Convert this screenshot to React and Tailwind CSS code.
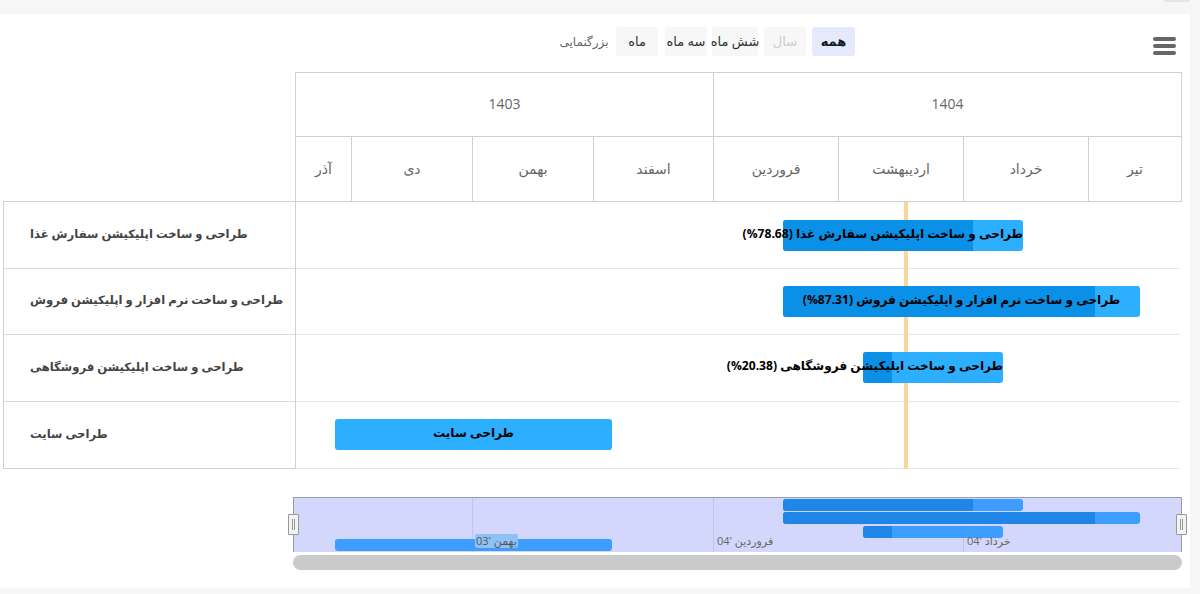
const months = [
  ["آذر", "w-[56px]"],
  ["دی", "w-[121px]"],
  ["بهمن", "w-[121px]"],
  ["اسفند", "w-[120px]"],
  ["فروردین", "w-[125px]"],
  ["اردیبهشت", "w-[125px]"],
  ["خرداد", "w-[125px]"],
  ["تیر", "w-[92px]"],
];
const rows = [
  { label: "طراحی و ساخت اپلیکیشن سفارش غذا", text: "طراحی و ساخت اپلیکیشن سفارش غذا (78.68%)", ml: "ml-[487px]", w: "w-[240px]", p: "w-[190px]", end: true, h: "h-[67px]", lh: "h-[67px]", pad: "" },
  { label: "طراحی و ساخت نرم افزار و اپلیکیشن فروش", text: "طراحی و ساخت نرم افزار و اپلیکیشن فروش (87.31%)", ml: "ml-[487px]", w: "w-[357px]", p: "w-[312px]", end: false, h: "h-[66px]", lh: "h-[66px]", pad: "" },
  { label: "طراحی و ساخت اپلیکیشن فروشگاهی", text: "طراحی و ساخت اپلیکیشن فروشگاهی (20.38%)", ml: "ml-[567px]", w: "w-[140px]", p: "w-[29px]", end: true, h: "h-[67px]", lh: "h-[67px]", pad: "pb-[1px]" },
  { label: "طراحی سایت", text: "طراحی سایت", ml: "ml-[39px]", w: "w-[277px]", p: "", end: false, h: "h-[67px]", lh: "h-[66px]", pad: "pb-[2px]" },
];
const minis = [
  { ml: "ml-[489px]", w: "w-[240px]", p: "w-[190px]" },
  { ml: "ml-[489px]", w: "w-[357px]", p: "w-[312px]" },
  { ml: "ml-[569px]", w: "w-[140px]", p: "w-[29px]" },
  { ml: "ml-[41px]", w: "w-[277px]", p: "" },
];
function Handle({ className }) {
  return (
    <div className={"absolute top-[16px] w-[11px] h-[21px] bg-[#f2f2f2] border border-[#999] rounded-[1px] flex items-center justify-center gap-[1px] " + className}>
      <span className="w-px h-[11px] bg-[#999]" />
      <span className="w-px h-[11px] bg-[#999]" />
    </div>
  );
}
function Btn({ children, className }) {
  return <div className={"h-[29px] rounded-[3px] flex items-center justify-center text-[13px] " + className}>{children}</div>;
}
export default function App() {
  return (
    <div dir="ltr" className="relative w-[1200px] h-[594px] overflow-hidden bg-[#f6f6f6] pt-[14px] font-['Open_Sans','DejaVu_Sans',sans-serif]">
      <div className="absolute top-0 right-[10px] w-[26px] h-[2px] rounded-b bg-[#e6e6e6]" />
      <div className="w-[1190px] h-[574px] bg-white">
        {/* toolbar */}
        <div className="relative h-[58px] pt-[13px] pl-[560px] flex items-start">
          <div dir="rtl" className="w-[48px] mr-[8px] h-[29px] flex items-center justify-center text-[12px] text-[#666] whitespace-nowrap">بزرگنمایی</div>
          <Btn className="w-[42px] mr-[7px] bg-[#f7f7f7] text-[#333]">ماه</Btn>
          <Btn className="w-[42px] mr-[5px] bg-[#f7f7f7] text-[#333] whitespace-nowrap">سه ماه</Btn>
          <Btn className="w-[46px] mr-[6px] bg-[#f7f7f7] text-[#333] whitespace-nowrap">شش ماه</Btn>
          <Btn className="w-[42px] mr-[6px] bg-[#f7f7f7] text-[#ccc]">سال</Btn>
          <Btn className="w-[43px] bg-[#e6e9fb] text-[#111827] font-bold text-[12px]">همه</Btn>
          <div className="absolute left-[1153px] top-[23px] w-[23px] flex flex-col gap-[3px]">
            <span className="h-[4px] rounded-full bg-[#666]" />
            <span className="h-[4px] rounded-full bg-[#666]" />
            <span className="h-[4px] rounded-full bg-[#666]" />
          </div>
        </div>

        {/* header grid */}
        <div className="ml-[295px] w-[887px] h-[130px] border border-[#d0d0d0] text-[#666] text-[14px]">
          <div className="flex h-[64px] border-b border-[#d0d0d0]">
            <div className="w-[418px] border-r border-[#d0d0d0] flex items-center justify-center pb-[2px]">1403</div>
            <div className="flex-1 flex items-center justify-center pb-[2px]">1404</div>
          </div>
          <div className="flex h-[64px]">
            {months.map(([m, w], i) => (
              <div key={m} className={w + " flex items-center justify-center pb-[2px] " + (i < months.length - 1 ? "border-r border-[#d0d0d0]" : "")} dir="rtl">{m}</div>
            ))}
          </div>
        </div>

        {/* body */}
        <div className="flex ml-[3px]">
          <div className="w-[293px] -mt-px border border-[#d0d0d0] self-start">
            {rows.map((r, i) => (
              <div key={i} dir="rtl" className={r.lh + " flex items-center justify-end pl-[26px] pb-[3px] text-[11.6px] font-bold text-[#444] whitespace-nowrap " + (i < 3 ? "border-b border-[#d8d8d8]" : "")}>
                <span>{r.label}</span>
              </div>
            ))}
          </div>
          <div className="relative w-[884px]">
            {rows.map((r, i) => (
              <div key={i} className={r.h + " flex items-center border-b border-[#e6e6e6] " + r.pad}>
                <div className={"relative z-10 h-[31px] rounded-[3px] bg-[#2caffe] " + r.ml + " " + r.w}>
                  {r.p && <div className={"absolute left-0 top-0 h-full rounded-l-[3px] bg-[#0a90e6] " + r.p} />}
                  <div dir="rtl" className={"absolute inset-0 flex items-center whitespace-nowrap text-[12.1px] font-bold text-black pb-[2px] " + (r.end ? "justify-start" : "justify-center")}>
                    <span>{r.text}</span>
                  </div>
                </div>
              </div>
            ))}
            <div className="absolute left-[608px] top-0 bottom-0 w-[4px] bg-[#f9d79c]" />
          </div>
        </div>

        {/* navigator */}
        <div className="relative ml-[293px] mt-[28px] w-[889px] h-[55px] bg-[#d3d7fb] border-x border-t border-[#9a9aa8] pt-[1px]">
          <div className="absolute left-[178px] top-0 bottom-0 w-px bg-[#c0c4ea]" />
          <div className="absolute left-[419px] top-0 bottom-0 w-px bg-[#c0c4ea]" />
          <div className="absolute left-[669px] top-[40px] bottom-0 w-px bg-[#c0c4ea]" />
          <div className="flex flex-col gap-[1.4px]">
            {minis.map((m, i) => (
              <div key={i} className={"relative h-[12px] rounded-[3px] bg-[#3d9eff] " + m.ml + " " + m.w}>
                {m.p && <div className={"h-full rounded-l-[3px] bg-[#1f86e8] " + m.p} />}
              </div>
            ))}
          </div>
          <div dir="rtl" className="absolute left-[181px] top-[36px] px-[1px] rounded-[2px] bg-[#8fc0f6] text-[11px] leading-[14px] text-[#555] whitespace-nowrap">بهمن '03</div>
          <div dir="rtl" className="absolute left-[423px] top-[36px] text-[11px] leading-[14px] text-[#666] whitespace-nowrap">فروردین '04</div>
          <div dir="rtl" className="absolute left-[673px] top-[36px] text-[11px] leading-[14px] text-[#666] whitespace-nowrap">خرداد '04</div>
          <Handle className="-left-[6px]" />
          <Handle className="-right-[6px]" />
        </div>
        <div className="ml-[293px] mt-[3px] w-[889px] h-[15px] rounded-full bg-[#cacaca]" />
      </div>
    </div>
  );
}
